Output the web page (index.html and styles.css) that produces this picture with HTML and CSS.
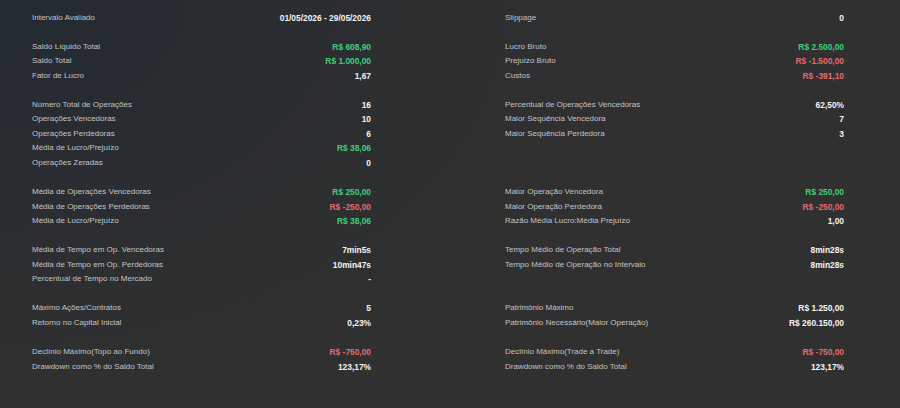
FILE: index.html
```html
<!DOCTYPE html>
<html lang="pt-BR">
<head>
<meta charset="utf-8">
<title>Relatório</title>
<link rel="stylesheet" href="styles.css">
</head>
<body>
<main class="report">
  <section class="group">
    <div class="col">
      <div class="row"><span class="label">Intervalo Avaliado</span><span class="value">01/05/2026 - 29/05/2026</span></div>
    </div>
    <div class="col">
      <div class="row"><span class="label">Slippage</span><span class="value">0</span></div>
    </div>
  </section>
  <section class="group">
    <div class="col">
      <div class="row"><span class="label">Saldo Líquido Total</span><span class="value pos">R$ 608,90</span></div>
      <div class="row"><span class="label">Saldo Total</span><span class="value pos">R$ 1.000,00</span></div>
      <div class="row"><span class="label">Fator de Lucro</span><span class="value">1,67</span></div>
    </div>
    <div class="col">
      <div class="row"><span class="label">Lucro Bruto</span><span class="value pos">R$ 2.500,00</span></div>
      <div class="row"><span class="label">Prejuízo Bruto</span><span class="value neg">R$ -1.500,00</span></div>
      <div class="row"><span class="label">Custos</span><span class="value neg">R$ -391,10</span></div>
    </div>
  </section>
  <section class="group">
    <div class="col">
      <div class="row"><span class="label">Número Total de Operações</span><span class="value">16</span></div>
      <div class="row"><span class="label">Operações Vencedoras</span><span class="value">10</span></div>
      <div class="row"><span class="label">Operações Perdedoras</span><span class="value">6</span></div>
      <div class="row"><span class="label">Média de Lucro/Prejuízo</span><span class="value pos">R$ 38,06</span></div>
      <div class="row"><span class="label">Operações Zeradas</span><span class="value">0</span></div>
    </div>
    <div class="col">
      <div class="row"><span class="label">Percentual de Operações Vencedoras</span><span class="value">62,50%</span></div>
      <div class="row"><span class="label">Maior Sequência Vencedora</span><span class="value">7</span></div>
      <div class="row"><span class="label">Maior Sequência Perdedora</span><span class="value">3</span></div>
    </div>
  </section>
  <section class="group">
    <div class="col">
      <div class="row"><span class="label">Média de Operações Vencedoras</span><span class="value pos">R$ 250,00</span></div>
      <div class="row"><span class="label">Média de Operações Perdedoras</span><span class="value neg">R$ -250,00</span></div>
      <div class="row"><span class="label">Média de Lucro/Prejuízo</span><span class="value pos">R$ 38,06</span></div>
    </div>
    <div class="col">
      <div class="row"><span class="label">Maior Operação Vencedora</span><span class="value pos">R$ 250,00</span></div>
      <div class="row"><span class="label">Maior Operação Perdedora</span><span class="value neg">R$ -250,00</span></div>
      <div class="row"><span class="label">Razão Média Lucro:Média Prejuízo</span><span class="value">1,00</span></div>
    </div>
  </section>
  <section class="group">
    <div class="col">
      <div class="row"><span class="label">Média de Tempo em Op. Vencedoras</span><span class="value">7min5s</span></div>
      <div class="row"><span class="label">Média de Tempo em Op. Perdedoras</span><span class="value">10min47s</span></div>
      <div class="row"><span class="label">Percentual de Tempo no Mercado</span><span class="value">-</span></div>
    </div>
    <div class="col">
      <div class="row"><span class="label">Tempo Médio de Operação Total</span><span class="value">8min28s</span></div>
      <div class="row"><span class="label">Tempo Médio de Operação no Intervalo</span><span class="value">8min28s</span></div>
    </div>
  </section>
  <section class="group">
    <div class="col">
      <div class="row"><span class="label">Máximo Ações/Contratos</span><span class="value">5</span></div>
      <div class="row"><span class="label">Retorno no Capital Inicial</span><span class="value">0,23%</span></div>
    </div>
    <div class="col">
      <div class="row"><span class="label">Patrimônio Máximo</span><span class="value">R$ 1.250,00</span></div>
      <div class="row"><span class="label">Patrimônio Necessário(Maior Operação)</span><span class="value">R$ 260.150,00</span></div>
    </div>
  </section>
  <section class="group">
    <div class="col">
      <div class="row"><span class="label">Declínio Máximo(Topo ao Fundo)</span><span class="value neg">R$ -750,00</span></div>
      <div class="row"><span class="label">Drawdown como % do Saldo Total</span><span class="value">123,17%</span></div>
    </div>
    <div class="col">
      <div class="row"><span class="label">Declínio Máximo(Trade a Trade)</span><span class="value neg">R$ -750,00</span></div>
      <div class="row"><span class="label">Drawdown como % do Saldo Total</span><span class="value">123,17%</span></div>
    </div>
  </section>
</main>
</body>
</html>
```

FILE: styles.css
```css
html, body {
  margin: 0;
  padding: 0;
  width: 900px;
  height: 408px;
  overflow: hidden;
}

body {
  background: radial-gradient(ellipse 620px 420px at 0 0, #232a32 0%, #2a2d31 45%, #303030 100%);
  font-family: "Liberation Sans", Arial, sans-serif;
  font-size: 8px;
  color: #c4c4c4;
}

.report {
  padding: 10.5px 56px 0 32px;
  display: flex;
  flex-direction: column;
  gap: 14.55px;
}

.group {
  display: grid;
  grid-template-columns: 339px 339px;
  column-gap: 134px;
}

.row {
  display: flex;
  justify-content: space-between;
  align-items: center;
  height: 14.55px;
  line-height: 14.55px;
  white-space: nowrap;
}

.value {
  color: #f4f4f4;
  font-weight: bold;
  font-size: 8.4px;
}

.value.pos { color: #3fcf79; }
.value.neg { color: #e26c6e; }
```
